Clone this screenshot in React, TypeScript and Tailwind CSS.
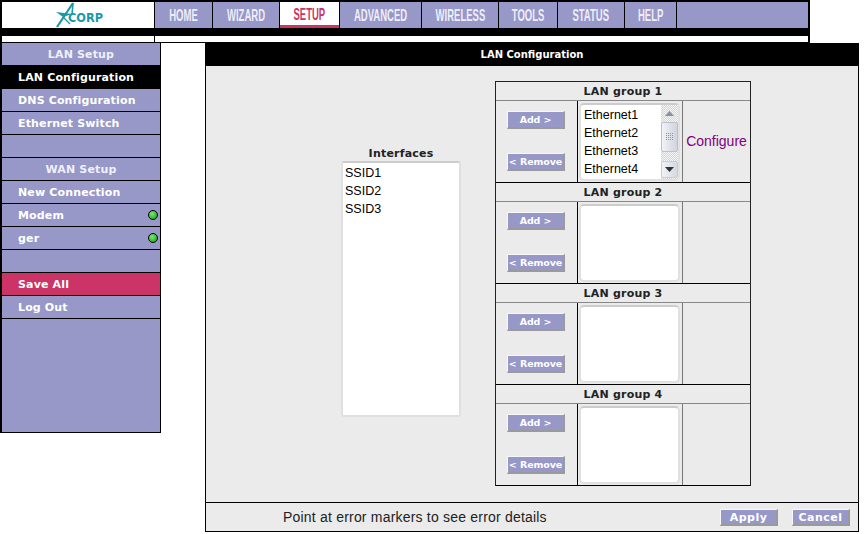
const navItems = [
  { label: "HOME", width: "w-[57px]" },
  { label: "WIZARD", width: "w-[66px]" },
  { label: "SETUP", width: "w-[59px]", active: true },
  { label: "ADVANCED", width: "w-[81px]" },
  { label: "WIRELESS", width: "w-[76px]" },
  { label: "TOOLS", width: "w-[58px]" },
  { label: "STATUS", width: "w-[66px]" },
  { label: "HELP", width: "w-[51px]" },
];

type SideRow = { label?: string; kind?: "head" | "selected" | "save"; led?: boolean };

const sideRows: SideRow[] = [
  { label: "LAN Setup", kind: "head" },
  { label: "LAN Configuration", kind: "selected" },
  { label: "DNS Configuration" },
  { label: "Ethernet Switch" },
  {},
  { label: "WAN Setup", kind: "head" },
  { label: "New Connection" },
  { label: "Modem", led: true },
  { label: "ger", led: true },
  {},
  { label: "Save All", kind: "save" },
  { label: "Log Out" },
];

function Logo() {
  return (
    <svg width="60" height="26" viewBox="0 0 60 26" className="block">
      <path d="M25 1 L9 25" stroke="#1b98a8" strokeWidth="2.2" fill="none" />
      <path d="M25 1 L24 13" stroke="#1b98a8" strokeWidth="1.6" fill="none" />
      <path d="M8 10 L24 12 L15 15 Z" fill="#1b98a8" />
      <path d="M15 15 L22 22" stroke="#1b98a8" strokeWidth="1.2" fill="none" />
      <text x="20" y="19.5" fontFamily="'DejaVu Sans', sans-serif" fontWeight="700" fontSize="12" fill="#1b98a8" textLength="35" lengthAdjust="spacingAndGlyphs">
        CORP
      </text>
    </svg>
  );
}

function Led() {
  return (
    <span className="relative block h-[11px] w-[11px]">
      <span className="block h-[10px] w-[10px] rounded-full border border-black bg-[radial-gradient(circle_at_40%_35%,#7dea6f,#22b82c_70%)]" />
      <span className="absolute right-[-2px] bottom-[-1px] h-[5px] w-[5px] bg-[linear-gradient(#8a8aa8,#8a8aa8)_center/100%_1px_no-repeat,linear-gradient(#8a8aa8,#8a8aa8)_center/1px_100%_no-repeat]" />
    </span>
  );
}

function Sidebar() {
  return (
    <aside className="flex h-[390px] w-[161px] shrink-0 flex-col border-r border-b border-l-2 border-black bg-[#9797c8]">
      {sideRows.map((row, i) => {
        let cls = "text-white";
        if (row.kind === "selected") cls = "bg-black text-white";
        if (row.kind === "save") cls = "bg-[#cc3366] text-white";
        return (
          <div
            key={i}
            className={`flex h-[23px] shrink-0 items-center border-b border-black pt-[2px] text-[11px] font-bold tracking-[0.15px] ${cls} ${
              row.kind === "head" ? "justify-center" : "pl-[16px]"
            }`}
          >
            <span className={row.kind === "head" ? "text-[#f0f0fa]" : ""}>{row.label}</span>
            {row.led && (
              <span className="mr-[1px] mb-[2px] ml-auto">
                <Led />
              </span>
            )}
          </div>
        );
      })}
    </aside>
  );
}

function PurpleButton({ label, size = "small" }: { label: string; size?: "small" | "large" }) {
  return (
    <button
      className={`flex w-[58px] items-center justify-center border-t border-r-2 border-b-2 border-l border-t-[#f8f8f8] border-r-[#9a9a9a] border-b-[#9a9a9a] border-l-[#f8f8f8] bg-[#9797c8] font-bold whitespace-nowrap text-white ${
        size === "large" ? "h-[17px] pt-[3px] text-[11px] tracking-[0.5px]" : "h-[18px] pt-[1px] text-[9.5px] tracking-[-0.1px]"
      }`}
    >
      {label}
    </button>
  );
}

function ScrollBar() {
  return (
    <div className="flex h-[74px] w-[17px] shrink-0 flex-col bg-[repeating-conic-gradient(#d4d4d4_0_25%,#f6f6f6_0_50%)] bg-[length:2px_2px]">
      <div className="flex h-[17px] items-center justify-center">
        <svg width="9" height="5" viewBox="0 0 9 5">
          <path d="M0 5 L4.5 0 L9 5 Z" fill="#8c8f9c" />
        </svg>
      </div>
      <div className="flex h-[30px] items-center justify-center rounded-[2px] border border-[#bcbfce] bg-[linear-gradient(90deg,#f2f3f8,#d0d2de)]">
        <svg width="8" height="8" viewBox="0 0 8 8">
          {[0, 2, 4, 6].map((x) =>
            [0, 2, 4, 6].map((y) => <rect key={`${x}-${y}`} x={x} y={y} width="1" height="1" fill="#8f92a2" />)
          )}
        </svg>
      </div>
      <div className="h-[9px]" />
      <div className="flex h-[17px] items-center justify-center rounded-[2px] border border-[#c8cbd8] bg-[linear-gradient(90deg,#f2f3f8,#d5d7e2)]">
        <svg width="9" height="5" viewBox="0 0 9 5">
          <path d="M0 0 L9 0 L4.5 5 Z" fill="#333" />
        </svg>
      </div>
    </div>
  );
}

function LanGroup({ n, items }: { n: number; items?: string[] }) {
  return (
    <div>
      <div className="flex h-[19px] items-center justify-center border-b border-[#888] text-[11px] leading-none font-bold tracking-[0.2px] text-[#222]">
        LAN group {n}
      </div>
      <div className="flex h-[82px] border-b border-black">
        <div className="flex w-[81px] shrink-0 flex-col justify-between pt-[10px] pb-[11px] pl-[11px]">
          <PurpleButton label="Add >" />
          <PurpleButton label="< Remove" />
        </div>
        <div className="w-[106px] shrink-0 border-x border-l-black border-r-[#777] pt-[2px] pb-[1px] pl-[1px]">
          <div className="flex h-full w-[101px] rounded-[5px] border-2 border-[#e0e0e0] border-t-[#cccccc] bg-white">
            {items && (
              <>
                <ul className="flex-1 pl-[3px] font-['Liberation_Sans'] text-[12.5px] leading-[18px] text-black">
                  {items.map((it) => (
                    <li key={it} className="h-[18px] pt-[1px]">
                      {it}
                    </li>
                  ))}
                </ul>
                <ScrollBar />
              </>
            )}
          </div>
        </div>
        <div className="flex flex-1 items-center justify-center font-['Liberation_Sans'] text-[14px] text-[#800080]">
          {items ? "Configure" : ""}
        </div>
      </div>
    </div>
  );
}

export default function App() {
  return (
    <div className="h-[534px] w-[864px] overflow-hidden bg-white font-['DejaVu_Sans',sans-serif]">
      <header className="w-[810px] border-r border-black bg-black pr-[1px] pb-[1px]">
        <div className="flex gap-[1px] pt-[2px] pl-[2px]">
          <div className="flex h-[26px] w-[152px] items-center justify-center bg-white">
            <Logo />
          </div>
          {navItems.map((item) => (
            <div
              key={item.label}
              className={`flex h-[26px] items-center justify-center overflow-hidden pt-[2px] font-['Liberation_Sans',sans-serif] text-[17px] font-bold ${item.width} ${
                item.active ? "border-b-[3px] border-[#cc3366] bg-white text-[#cc3366]" : "bg-[#9797c8] text-[#eeeef8]"
              }`}
            >
              <span className="inline-block scale-x-[0.56]">{item.label}</span>
            </div>
          ))}
          <div className="h-[26px] flex-1 bg-[#9797c8]" />
        </div>
        <div className="mt-[8px] flex h-[6px] gap-[1px] pl-[2px]">
          <div className="w-[152px] bg-white" />
          <div className="flex-1 bg-white" />
        </div>
      </header>
      <div className="flex">
        <Sidebar />
        <main className="ml-[44px] flex h-[489px] w-[654px] flex-col border border-t-0 border-black bg-[#ebebeb]">
          <div className="flex h-[23px] shrink-0 items-center justify-center bg-black text-[10px] font-bold text-white">
            LAN Configuration
          </div>
          <div className="flex h-[437px] shrink-0 border-b border-black pl-[135px]">
            <div className="mt-[81px] flex w-[120px] flex-col">
              <div className="h-[14px] text-center text-[11px] leading-[14px] font-bold tracking-[0.2px] text-[#222]">
                Interfaces
              </div>
              <div className="h-[256px] rounded-[3px] border-2 border-[#e0e0e0] border-t-[#cccccc] bg-white pt-[1px] pl-[2px] font-['Liberation_Sans'] text-[12.5px] leading-[18px] text-black">
                <div>SSID1</div>
                <div>SSID2</div>
                <div>SSID3</div>
              </div>
            </div>
            <div className="mt-[15px] ml-[34px] h-[405px] w-[256px] border border-b-0 border-[#222]">
              <LanGroup n={1} items={["Ethernet1", "Ethernet2", "Ethernet3", "Ethernet4"]} />
              <LanGroup n={2} />
              <LanGroup n={3} />
              <LanGroup n={4} />
            </div>
          </div>
          <div className="flex flex-1 items-center pr-[8px] pl-[77px]">
            <span className="pt-[1px] font-['Liberation_Sans'] text-[14px] tracking-[0.2px] text-[#222]">
              Point at error markers to see error details
            </span>
            <div className="ml-auto flex gap-[14px] pt-[1px]">
              <PurpleButton label="Apply" size="large" />
              <PurpleButton label="Cancel" size="large" />
            </div>
          </div>
        </main>
      </div>
    </div>
  );
}
